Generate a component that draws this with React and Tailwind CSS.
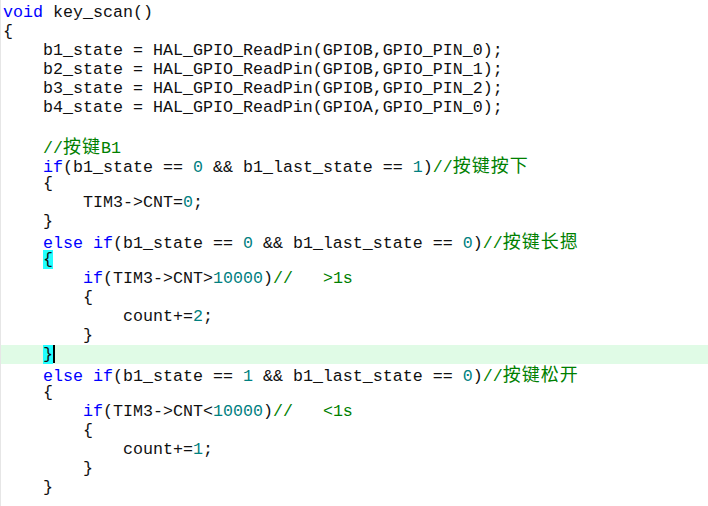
import React from "react";

const K = ({ children }) => <span className="text-[#0000ff]">{children}</span>;
const N = ({ children }) => <span className="text-[#008080]">{children}</span>;
const C = ({ children }) => <span className="text-[#008000]">{children}</span>;
const Z = ({ children }) => (
  <span className="inline-block h-[18px] overflow-visible text-[#008000] text-[18px] leading-[18px] tracking-[1px] font-['Noto_Sans_CJK_SC','Noto_Sans_CJK_JP',sans-serif]">
    {children}
  </span>
);

function Line({ children, hl }) {
  return (
    <div className={"h-[19px] leading-[19px] whitespace-pre pl-[2px] " + (hl ? "bg-[#e0fbe6]" : "")}>
      {children}
    </div>
  );
}

export default function App() {
  return (
    <div className="w-[708px] h-[506px] bg-white overflow-hidden border-l border-[#e6e6e6] pt-[3px] text-[#101010] text-[16.67px] font-['Liberation_Mono','Courier_New',monospace]">
      <Line><K>void</K> key_scan()</Line>
      <Line>{"{"}</Line>
      <Line>{"    b1_state = HAL_GPIO_ReadPin(GPIOB,GPIO_PIN_0);"}</Line>
      <Line>{"    b2_state = HAL_GPIO_ReadPin(GPIOB,GPIO_PIN_1);"}</Line>
      <Line>{"    b3_state = HAL_GPIO_ReadPin(GPIOB,GPIO_PIN_2);"}</Line>
      <Line>{"    b4_state = HAL_GPIO_ReadPin(GPIOA,GPIO_PIN_0);"}</Line>
      <Line>{" "}</Line>
      <Line>{"    "}<C>//</C><Z>按键</Z><C>B1</C></Line>
      <Line>{"    "}<K>if</K>{"(b1_state == "}<N>0</N>{" && b1_last_state == "}<N>1</N>{")"}<C>//</C><Z>按键按下</Z></Line>
      <Line>{"    {"}</Line>
      <Line>{"        TIM3->CNT="}<N>0</N>{";"}</Line>
      <Line>{"    }"}</Line>
      <Line>{"    "}<K>else if</K>{"(b1_state == "}<N>0</N>{" && b1_last_state == "}<N>0</N>{")"}<C>//</C><Z>按键长摁</Z></Line>
      <Line>{"    "}<span className="bg-[#22ffff]">{"{"}</span></Line>
      <Line>{"        "}<K>if</K>{"(TIM3->CNT>"}<N>10000</N>{")"}<C>{"//   >1s"}</C></Line>
      <Line>{"        {"}</Line>
      <Line>{"            count+="}<N>2</N>{";"}</Line>
      <Line>{"        }"}</Line>
      <Line hl>{"    "}<span className="bg-[#22ffff]">{"}"}</span><span className="inline-block w-[2px] h-[18px] bg-black align-[-4px]"></span></Line>
      <Line>{"    "}<K>else if</K>{"(b1_state == "}<N>1</N>{" && b1_last_state == "}<N>0</N>{")"}<C>//</C><Z>按键松开</Z></Line>
      <Line>{"    {"}</Line>
      <Line>{"        "}<K>if</K>{"(TIM3->CNT<"}<N>10000</N>{")"}<C>{"//   <1s"}</C></Line>
      <Line>{"        {"}</Line>
      <Line>{"            count+="}<N>1</N>{";"}</Line>
      <Line>{"        }"}</Line>
      <Line>{"    }"}</Line>
    </div>
  );
}
